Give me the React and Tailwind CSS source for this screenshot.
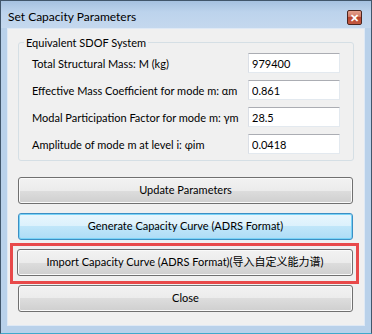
import React from 'react';

const FONT = { fontFamily: 'Lato, "Noto Sans CJK SC", sans-serif' };

function Row({ label, value }) {
  return (
    <div className="flex items-center justify-between h-[20px]">
      <span className="text-[11px] text-black leading-none whitespace-nowrap">{label}</span>
      <input
        readOnly
        value={value}
        className="w-[92px] h-[20px] bg-white border border-[#dbdfe6] border-t-[#abadb3] border-r-[#e3e9ef] border-b-[#e3e9ef] px-[3px] text-[11px] text-black outline-none"
      />
    </div>
  );
}

function WinButton({ children, primary }) {
  const base = 'w-full h-[27px] rounded-[3px] text-[11px] text-black flex items-center justify-center whitespace-nowrap';
  if (primary) {
    return (
      <button className={`${base} border border-[#3c8fc4] bg-[linear-gradient(#e9f6fd_0%,#dbf1fc_50%,#c0e6f9_50%,#aedcf6_100%)] shadow-[inset_0_0_0_1px_#79d3f7]`}>
        {children}
      </button>
    );
  }
  return (
    <button className={`${base} border border-[#707070] bg-[linear-gradient(#f2f2f2_0%,#ebebeb_50%,#dddddd_50%,#cfcfcf_100%)] shadow-[inset_0_0_0_1px_#fafafa]`}>
      {children}
    </button>
  );
}

export default function App() {
  return (
    <div style={FONT} className="w-[372px] h-[334px] flex flex-col border border-[#41566b] border-b-[#3fa9cc] bg-[#b9d1ea]">
      {/* title bar */}
      <div className="h-[27px] flex items-center justify-between pl-[7px] pr-[9px] bg-[linear-gradient(#a5c1e0_0%,#bcd3ec_40%,#c4d8ee_100%)]">
        <span className="text-[12px] text-black leading-none mt-[5px]">Set Capacity Parameters</span>
        <div className="w-[15px] h-[15px] mt-[6px] rounded-[2px] border border-[#4b2620] bg-[linear-gradient(#e4a08c_0%,#cf7560_50%,#b8442e_50%,#c45a42_100%)] flex items-center justify-center">
          <span className="text-white text-[11px] font-bold leading-none">✕</span>
        </div>
      </div>

      {/* client area */}
      <div className="flex-1 mx-[6px] mb-[7px] border border-[#dfe9f5] bg-[#f0f0f0] pl-[10px] pr-[10px] pt-[8px] flex flex-col">
        <fieldset className="min-w-0 border border-[#d5dfe5] rounded-[3px] px-[13px] pt-[5px] pb-[6px]">
          <legend className="text-[11px] text-black -ml-[8px] px-[2px] leading-none">Equivalent SDOF System</legend>
          <div className="flex flex-col gap-[7px]">
            <Row label="Total Structural Mass: M (kg)" value="979400" />
            <Row label="Effective Mass Coefficient for mode m: αm" value="0.861" />
            <Row label="Modal Participation Factor for mode m: γm" value="28.5" />
            <Row label="Amplitude of mode m at level i: φim" value="0.0418" />
          </div>
        </fieldset>

        <div className="mt-[16px] flex flex-col gap-[9px] pr-[1px]">
          <WinButton>Update Parameters</WinButton>
          <WinButton primary>Generate Capacity Curve (ADRS Format)</WinButton>
          <div className="-ml-[8px] -mr-[6px] -mt-[6px] -mb-[8px] border-[3px] border-[#e8494a] pl-[4px] pr-[3px] pt-[3px] pb-[5px]">
            <WinButton>Import Capacity Curve (ADRS Format)(导入自定义能力谱)</WinButton>
          </div>
          <WinButton>Close</WinButton>
        </div>
      </div>
    </div>
  );
}
